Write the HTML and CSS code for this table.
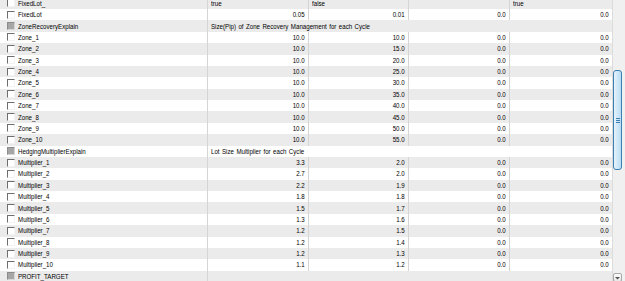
FILE: index.html
```html
<!DOCTYPE html>
<html>
<head>
<meta charset="utf-8">
<link rel="stylesheet" href="styles.css">
</head>
<body>
<div class="window">
  <div class="list">
    <div class="row"><div class="name"><span class="cb"></span><span class="t">FixedLot_</span></div><div class="cell"><span class="t">true</span></div><div class="cell"><span class="t">false</span></div><div class="cell"></div><div class="cell"><span class="t">true</span></div></div>
    <div class="row"><div class="name"><span class="cb"></span><span class="t">FixedLot</span></div><div class="cell num"><span class="t">0.05</span></div><div class="cell num"><span class="t">0.01</span></div><div class="cell num"><span class="t">0.0</span></div><div class="cell num"><span class="t">0.0</span></div></div>
    <div class="row"><div class="name"><span class="cb off"></span><span class="t">ZoneRecoveryExplain</span></div><div class="cell wide"><span class="t">Size(Pip) of Zone Recovery Management for each Cycle</span></div></div>
    <div class="row"><div class="name"><span class="cb"></span><span class="t">Zone_1</span></div><div class="cell num"><span class="t">10.0</span></div><div class="cell num"><span class="t">10.0</span></div><div class="cell num"><span class="t">0.0</span></div><div class="cell num"><span class="t">0.0</span></div></div>
    <div class="row"><div class="name"><span class="cb"></span><span class="t">Zone_2</span></div><div class="cell num"><span class="t">10.0</span></div><div class="cell num"><span class="t">15.0</span></div><div class="cell num"><span class="t">0.0</span></div><div class="cell num"><span class="t">0.0</span></div></div>
    <div class="row"><div class="name"><span class="cb"></span><span class="t">Zone_3</span></div><div class="cell num"><span class="t">10.0</span></div><div class="cell num"><span class="t">20.0</span></div><div class="cell num"><span class="t">0.0</span></div><div class="cell num"><span class="t">0.0</span></div></div>
    <div class="row"><div class="name"><span class="cb"></span><span class="t">Zone_4</span></div><div class="cell num"><span class="t">10.0</span></div><div class="cell num"><span class="t">25.0</span></div><div class="cell num"><span class="t">0.0</span></div><div class="cell num"><span class="t">0.0</span></div></div>
    <div class="row"><div class="name"><span class="cb"></span><span class="t">Zone_5</span></div><div class="cell num"><span class="t">10.0</span></div><div class="cell num"><span class="t">30.0</span></div><div class="cell num"><span class="t">0.0</span></div><div class="cell num"><span class="t">0.0</span></div></div>
    <div class="row"><div class="name"><span class="cb"></span><span class="t">Zone_6</span></div><div class="cell num"><span class="t">10.0</span></div><div class="cell num"><span class="t">35.0</span></div><div class="cell num"><span class="t">0.0</span></div><div class="cell num"><span class="t">0.0</span></div></div>
    <div class="row"><div class="name"><span class="cb"></span><span class="t">Zone_7</span></div><div class="cell num"><span class="t">10.0</span></div><div class="cell num"><span class="t">40.0</span></div><div class="cell num"><span class="t">0.0</span></div><div class="cell num"><span class="t">0.0</span></div></div>
    <div class="row"><div class="name"><span class="cb"></span><span class="t">Zone_8</span></div><div class="cell num"><span class="t">10.0</span></div><div class="cell num"><span class="t">45.0</span></div><div class="cell num"><span class="t">0.0</span></div><div class="cell num"><span class="t">0.0</span></div></div>
    <div class="row"><div class="name"><span class="cb"></span><span class="t">Zone_9</span></div><div class="cell num"><span class="t">10.0</span></div><div class="cell num"><span class="t">50.0</span></div><div class="cell num"><span class="t">0.0</span></div><div class="cell num"><span class="t">0.0</span></div></div>
    <div class="row"><div class="name"><span class="cb"></span><span class="t">Zone_10</span></div><div class="cell num"><span class="t">10.0</span></div><div class="cell num"><span class="t">55.0</span></div><div class="cell num"><span class="t">0.0</span></div><div class="cell num"><span class="t">0.0</span></div></div>
    <div class="row"><div class="name"><span class="cb off"></span><span class="t">HedgingMultiplierExplain</span></div><div class="cell wide"><span class="t">Lot Size Multiplier for each Cycle</span></div></div>
    <div class="row"><div class="name"><span class="cb"></span><span class="t">Multiplier_1</span></div><div class="cell num"><span class="t">3.3</span></div><div class="cell num"><span class="t">2.0</span></div><div class="cell num"><span class="t">0.0</span></div><div class="cell num"><span class="t">0.0</span></div></div>
    <div class="row"><div class="name"><span class="cb"></span><span class="t">Multiplier_2</span></div><div class="cell num"><span class="t">2.7</span></div><div class="cell num"><span class="t">2.0</span></div><div class="cell num"><span class="t">0.0</span></div><div class="cell num"><span class="t">0.0</span></div></div>
    <div class="row"><div class="name"><span class="cb"></span><span class="t">Multiplier_3</span></div><div class="cell num"><span class="t">2.2</span></div><div class="cell num"><span class="t">1.9</span></div><div class="cell num"><span class="t">0.0</span></div><div class="cell num"><span class="t">0.0</span></div></div>
    <div class="row"><div class="name"><span class="cb"></span><span class="t">Multiplier_4</span></div><div class="cell num"><span class="t">1.8</span></div><div class="cell num"><span class="t">1.8</span></div><div class="cell num"><span class="t">0.0</span></div><div class="cell num"><span class="t">0.0</span></div></div>
    <div class="row"><div class="name"><span class="cb"></span><span class="t">Multiplier_5</span></div><div class="cell num"><span class="t">1.5</span></div><div class="cell num"><span class="t">1.7</span></div><div class="cell num"><span class="t">0.0</span></div><div class="cell num"><span class="t">0.0</span></div></div>
    <div class="row"><div class="name"><span class="cb"></span><span class="t">Multiplier_6</span></div><div class="cell num"><span class="t">1.3</span></div><div class="cell num"><span class="t">1.6</span></div><div class="cell num"><span class="t">0.0</span></div><div class="cell num"><span class="t">0.0</span></div></div>
    <div class="row"><div class="name"><span class="cb"></span><span class="t">Multiplier_7</span></div><div class="cell num"><span class="t">1.2</span></div><div class="cell num"><span class="t">1.5</span></div><div class="cell num"><span class="t">0.0</span></div><div class="cell num"><span class="t">0.0</span></div></div>
    <div class="row"><div class="name"><span class="cb"></span><span class="t">Multiplier_8</span></div><div class="cell num"><span class="t">1.2</span></div><div class="cell num"><span class="t">1.4</span></div><div class="cell num"><span class="t">0.0</span></div><div class="cell num"><span class="t">0.0</span></div></div>
    <div class="row"><div class="name"><span class="cb"></span><span class="t">Multiplier_9</span></div><div class="cell num"><span class="t">1.2</span></div><div class="cell num"><span class="t">1.3</span></div><div class="cell num"><span class="t">0.0</span></div><div class="cell num"><span class="t">0.0</span></div></div>
    <div class="row"><div class="name"><span class="cb"></span><span class="t">Multiplier_10</span></div><div class="cell num"><span class="t">1.1</span></div><div class="cell num"><span class="t">1.2</span></div><div class="cell num"><span class="t">0.0</span></div><div class="cell num"><span class="t">0.0</span></div></div>
    <div class="row"><div class="name"><span class="cb off"></span><span class="t">PROFIT_TARGET</span></div><div class="cell wide"></div></div>
  </div>
  <div class="scroll">
    <div class="thumb"><span class="grip"></span></div>
    <div class="track-fill"></div>
    <div class="down"><svg width="7" height="4" viewBox="0 0 7 4"><path d="M1 1h5L3.5 3.5z" fill="#555"/></svg></div>
  </div>
</div>
</body>
</html>
```

FILE: styles.css
```css
html, body {
  margin: 0;
  padding: 0;
  background: #ffffff;
  overflow: hidden;
}

body {
  font-family: "Liberation Sans", Arial, sans-serif;
  font-size: 7px;
  color: #000;
}

.window {
  display: flex;
  height: 281px;
  overflow: hidden;
}

.list {
  width: 612px;
  flex: none;
  margin-top: -2.375px;
}

.row {
  display: grid;
  grid-template-columns: 207px 101px 100px 101px 103px;
  height: 11.375px;
  background: #ffffff;
}

.row:nth-child(odd) {
  background: #ebebeb;
}

.name {
  display: flex;
  align-items: center;
  padding-left: 7px;
  white-space: nowrap;
  overflow: hidden;
}

.cell {
  display: flex;
  align-items: center;
  border-left: 1px solid #d5d5d5;
  padding: 0 3px;
  white-space: nowrap;
  overflow: hidden;
}

.cell.num {
  justify-content: flex-end;
}

.cell.wide {
  grid-column: 2 / 6;
  word-spacing: 0.8px;
}

.cb {
  flex: none;
  width: 8px;
  height: 8px;
  box-sizing: border-box;
  border-top: 1px solid #6e6e6e;
  border-left: 1px solid #6e6e6e;
  border-right: 1px solid #f2f2f2;
  border-bottom: 1px solid #f2f2f2;
  background: #ffffff;
  margin-right: 3px;
}

.cb.off {
  background: #a6a6a6;
  border-color: #8c8c8c #d6d6d6 #d6d6d6 #8c8c8c;
}

.t {
  display: inline-block;
  transform: scaleX(0.88);
  transform-origin: left center;
}

.num .t {
  transform-origin: right center;
}

.scroll {
  width: 13px;
  flex: none;
  box-sizing: border-box;
  border-left: 1px solid #dcdcdc;
  background: #f0f0f0;
  display: flex;
  flex-direction: column;
  padding-top: 70px;
}

.thumb {
  margin-left: 0;
  width: 9px;
  height: 100px;
  box-sizing: border-box;
  border: 1px solid #3c7fb1;
  border-radius: 3px;
  background: linear-gradient(to right, #e6f3fc, #b9dcf4);
  display: flex;
  align-items: center;
  justify-content: center;
}

.grip {
  width: 4px;
  height: 5px;
  background: repeating-linear-gradient(to bottom, #3c7fb1 0, #3c7fb1 1px, transparent 1px, transparent 2px);
}

.track-fill {
  flex: 1;
}

.down {
  width: 9px;
  height: 9px;
  margin-bottom: -1px;
  box-sizing: border-box;
  border: 1px solid #a8a8a8;
  border-radius: 2px;
  background: linear-gradient(to bottom, #fdfdfd, #e6e6e6);
  display: flex;
  align-items: center;
  justify-content: center;
}
```
